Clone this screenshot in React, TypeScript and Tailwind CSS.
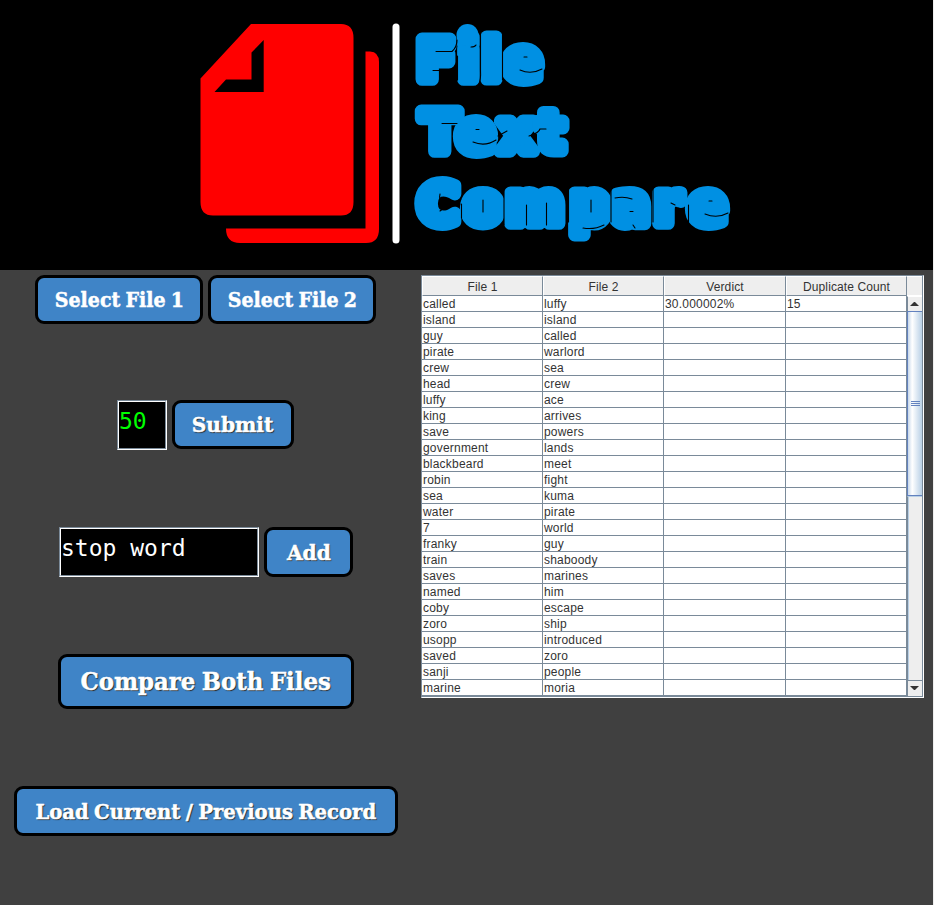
import React from "react";

const ROWS: [string, string][] = [
  ["called", "luffy"], ["island", "island"], ["guy", "called"], ["pirate", "warlord"], ["crew", "sea"],
  ["head", "crew"], ["luffy", "ace"], ["king", "arrives"], ["save", "powers"], ["government", "lands"],
  ["blackbeard", "meet"], ["robin", "fight"], ["sea", "kuma"], ["water", "pirate"], ["7", "world"],
  ["franky", "guy"], ["train", "shaboody"], ["saves", "marines"], ["named", "him"], ["coby", "escape"],
  ["zoro", "ship"], ["usopp", "introduced"], ["saved", "zoro"], ["sanji", "people"], ["marine", "moria"],
];

const COLS = "grid grid-cols-[121px_121px_122px_121px]";

function Banner() {
  return (
    <header className="h-[270px] bg-black">
      <svg width="933" height="270" viewBox="0 0 933 270">
        <path
          fill="#ff0000"
          fillRule="evenodd"
          d="M251 24H341Q353.500 24 353.500 38V202Q353.500 215.500 341 215.500H213Q200.500 215.500 200.500 202V78.500ZM263.700 40L251.500 52.500V79.500H226L214.500 92H263.700Z"
        />
        <path fill="#ff0000" d="M365.500 51.500H370Q379 52 379 62V229Q379 243 366 243H240Q226 243 226 228.500H365.500Z" />
        <rect x="392.500" y="23.500" width="7" height="220" rx="3.500" fill="#fff" />
        <g
          fill="#0090e3"
          stroke="#0090e3"
          strokeWidth="13"
          strokeLinejoin="round"
          fontFamily="'DejaVu Sans', sans-serif"
          fontWeight="700"
          fontSize="55"
        >
          <text x="417 459 482 504" y="79">File</text>
          <text x="421 457 499 538" y="151">Text</text>
          <text x="418 464 506 570 612 654 689" y="223">Compare</text>
        </g>
        <circle cx="467.500" cy="35" r="11" fill="#0090e3" />
        <circle cx="518" cy="134" r="12" fill="#0090e3" />
        {/* hairline cuts between and inside the letters */}
        <g fill="none" stroke="#000" strokeWidth="1.100" strokeLinecap="round">
          <path d="M436 51.500H452Q457 47 457 40M433 70.500H450" />
          <path d="M457.500 56V80M471 47Q475 47 476 45M480.500 30V70Q481 80 479 84M502.500 30V80" />
          <path d="M520 70Q531 75 542 69M524 57h3" />
          <path d="M442 123.500H457M473 142Q485 147 496 140M476 129.500h3" />
          <path d="M498 136L507 131M529 136Q539 133 540 129H546" />
          <path d="M440 194Q438 201 445 203Q454 204 461 199M440 211Q447 204 460 204" />
          <path d="M461.500 204V218M483 200V212M504 190V225M526.500 205V225M546.500 203V225M568.500 190V222" />
          <path d="M591 200V212M583 228Q594 230 604 225M611 190V222M615 198Q624 196 632 199M630 211.500h3" />
          <path d="M633 225L635 228M653 188V222M671 203L675 205M688.500 205V225" />
          <path d="M705 214Q717 219 728 213M709 201h3" />
        </g>
      </svg>
    </header>
  );
}

function Button({ label, box, text }: { label: string; box: string; text: string }) {
  return (
    <button className={`flex shrink-0 items-center justify-center rounded-[9px] border-[3px] border-black bg-[#3f84c7] ${box}`}>
      <span
        className={`shrink-0 whitespace-nowrap font-['DejaVu_Serif',serif] font-bold text-white [-webkit-text-stroke:0.5px_white] [word-spacing:-1.5px] ${text}`}
      >
        {label}
      </span>
    </button>
  );
}

function Field({ value, box }: { value: string; box: string }) {
  return (
    <div className={`h-[50px] shrink-0 border border-[#7a8a99] border-b-white border-r-white ${box}`}>
      <div className="h-full whitespace-pre border border-white border-b-[#7a8a99] border-r-[#7a8a99] bg-black pt-[3px] font-['DejaVu_Sans_Mono',monospace] text-[23px] leading-[32px]">
        {value}
      </div>
    </div>
  );
}

function ResultTable() {
  return (
    <div className="mt-[5px] flex h-[423px] w-[503px] shrink-0 border border-[#7a8a99] border-b-white border-r-white font-['Liberation_Sans',Arial,sans-serif] text-[12px] text-[#333]">
      <div className="w-[485px]">
        <div className={`${COLS} h-[20px] bg-[#eeeeee]`}>
          {["File 1", "File 2", "Verdict", "Duplicate Count"].map((h) => (
            <div key={h} className="h-[20px] border-b border-l border-r border-t border-b-[#7a8a99] border-l-white border-r-[#7a8a99] border-t-white text-center leading-[20px] tracking-[0.1px]">
              {h}
            </div>
          ))}
        </div>
        {ROWS.map(([a, b], i) => (
          <div key={i} className={`${COLS} h-[16px] bg-white leading-[17px] tracking-[0.2px]`}>
            {[a, b, i === 0 ? "30.000002%" : "", i === 0 ? "15" : ""].map((t, j) => (
              <div key={j} className="h-[16px] border-b border-r border-[#7a8a99] pl-px">{t}</div>
            ))}
          </div>
        ))}
        <div className="h-px bg-[#7a8a99]" />
      </div>
      <div className="flex w-[16px] flex-col border-b border-r border-[#7a8a99] bg-[#eeeeee]">
        <div className="h-[20px] border-b border-t border-white" />
        <div className="flex h-[15px] items-center justify-center border-l border-t border-l-[#7a8a99] border-t-white pr-[2px]">
          <svg width="9" height="5"><path d="M4 0h1L9 4H0Z" fill="#333" /></svg>
        </div>
        <div className="flex h-[185px] flex-col items-center justify-center gap-px border-y border-l border-[#6382bf] bg-linear-to-r from-[#c8d8ea] via-white via-30% to-[#b8cfe5]">
          <div className="h-px w-[9px] bg-[#6382bf]" />
          <div className="h-px w-[9px] bg-[#6382bf]" />
          <div className="h-px w-[9px] bg-[#6382bf]" />
        </div>
        <div className="flex grow border-l border-t border-l-[#7a8a99] border-t-[#b8cfe5]">
          <div className="w-px bg-[#b8cfe5]" />
        </div>
        <div className="flex h-[16px] items-center justify-center border-l border-t border-[#7a8a99] pr-[2px]">
          <svg width="9" height="5"><path d="M0 0H9L5 4H4Z" fill="#333" /></svg>
        </div>
      </div>
    </div>
  );
}

export default function App() {
  return (
    <div className="h-[905px] w-[934px] overflow-hidden border-r border-[#eeeeee] bg-[#404040]">
      <Banner />
      <main className="flex h-[635px]">
        <section className="flex w-[421px] shrink-0 flex-col">
          <div className="ml-[35px] mt-[5px] flex gap-[5px]">
            <Button label="Select File 1" box="h-[49px] w-[168px]" text="text-[21px] scale-x-[0.905]" />
            <Button label="Select File 2" box="h-[49px] w-[168px]" text="text-[21px] scale-x-[0.905]" />
          </div>
          <div className="ml-[117px] mt-[76px] flex gap-[5px]">
            <Field value="50" box="w-[50px] text-[#00ff00]" />
            <Button label="Submit" box="h-[49px] w-[122px]" text="text-[21px] scale-x-[0.96] [text-shadow:1px_1px_1px_#222]" />
          </div>
          <div className="ml-[59px] mt-[77px] flex gap-[5px]">
            <Field value="stop word" box="w-[200px] text-white" />
            <Button label="Add" box="h-[50px] w-[89px]" text="mt-[2px] text-[21px] scale-x-[0.96] [text-shadow:1px_1px_1px_#222]" />
          </div>
          <div className="ml-[58px] mt-[77px]">
            <Button label="Compare Both Files" box="h-[55px] w-[296px]" text="mt-px text-[24px] scale-x-[0.95] [text-shadow:1px_1px_1px_#222]" />
          </div>
          <div className="ml-[14px] mt-[77px]">
            <Button label="Load Current / Previous Record" box="h-[50px] w-[384px]" text="mt-px text-[20px] scale-x-[0.98] [text-shadow:1px_1px_1px_#222]" />
          </div>
        </section>
        <ResultTable />
      </main>
    </div>
  );
}
